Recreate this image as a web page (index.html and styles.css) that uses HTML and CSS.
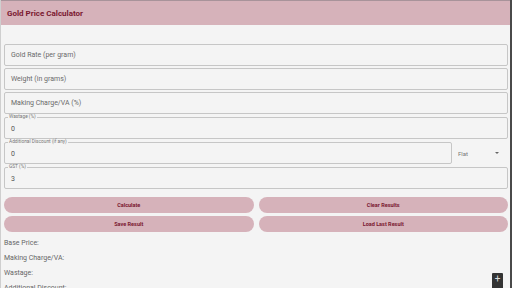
FILE: index.html
```html
<!DOCTYPE html>
<html>
<head>
<meta charset="utf-8">
<link rel="stylesheet" href="styles.css">
</head>
<body>
<div class="page">
  <header class="appbar"><span class="title">Gold Price Calculator</span></header>
  <main class="content">
    <div class="field"><span class="ph">Gold Rate (per gram)</span></div>
    <div class="field"><span class="ph">Weight (in grams)</span></div>
    <div class="field"><span class="ph">Making Charge/VA (%)</span></div>
    <div class="field notched"><span class="legend">Wastage (%)</span><span class="val">0</span></div>
    <div class="row">
      <div class="field notched grow"><span class="legend">Additional Discount (if any)</span><span class="val">0</span></div>
      <div class="select"><span>Flat</span><span class="caret"></span></div>
    </div>
    <div class="field notched"><span class="legend">GST (%)</span><span class="val">3</span></div>
    <div class="buttons">
      <button class="btn">Calculate</button>
      <button class="btn">Clear Results</button>
      <button class="btn">Save Result</button>
      <button class="btn">Load Last Result</button>
    </div>
    <div class="results">
      <p>Base Price:</p>
      <p>Making Charge/VA:</p>
      <p>Wastage:</p>
      <p>Additional Discount:</p>
    </div>
  </main>
  <div class="fab">+</div>
</div>
</body>
</html>
```
FILE: styles.css
```css
* { box-sizing: border-box; }
html, body { margin: 0; padding: 0; }
body {
  width: 512px;
  height: 288px;
  overflow: hidden;
  background: #f4f4f4;
  font-family: Roboto, "Liberation Sans", sans-serif;
}
.page {
  position: relative;
  height: 288px;
  border-left: 1px solid #cfcfcf;
  border-right: 2px solid #4a4a4a;
  overflow: hidden;
}
.appbar {
  height: 25px;
  background: #d6b2ba;
  border-top: 1px solid #a8939a;
  display: flex;
  align-items: center;
  padding-left: 6px;
}
.title {
  font-size: 8px;
  font-weight: 700;
  color: #7a1830;
}
.content {
  padding: 19px 2px 0 3px;
  display: flex;
  flex-direction: column;
}
.field {
  position: relative;
  height: 22px;
  border: 1px solid #c6c6c6;
  border-radius: 2px;
  margin-bottom: 2px;
  display: flex;
  align-items: center;
  padding-left: 6px;
  font-size: 7px;
}
.ph { color: #6a6a6a; }
.notched { margin-top: 1px; }
.legend {
  position: absolute;
  top: -4px;
  left: 3px;
  font-size: 4.8px;
  line-height: 6px;
  color: #777;
  background: #f4f4f4;
  padding: 0 1px;
}
.val { color: #555; font-size: 7px; padding-top: 2px; }
.row { display: flex; margin-top: 1px; }
.row .field { margin-top: 0; }
.grow { flex: 1; }
.select {
  width: 56px;
  height: 22px;
  display: flex;
  align-items: center;
  justify-content: space-between;
  padding: 0 9px 0 6px;
  font-size: 6px;
  color: #777;
}
.caret {
  width: 0; height: 0;
  border-left: 2px solid transparent;
  border-right: 2px solid transparent;
  border-top: 2px solid #666;
}
.buttons {
  margin-top: 6px;
  display: grid;
  grid-template-columns: 1fr 1fr;
  column-gap: 5px;
  row-gap: 3px;
  padding-right: 0;
}
.btn {
  height: 16px;
  border: none;
  border-radius: 8px;
  background: #d6b2ba;
  color: #7a1830;
  font-family: Roboto, "Liberation Sans", sans-serif;
  font-weight: 700;
  font-size: 5.5px;
  padding: 0;
}
.results { margin-top: 4px; }
.results p {
  margin: 0;
  font-size: 7px;
  line-height: 15px;
  color: #666;
}
.fab {
  position: absolute;
  right: 7px;
  bottom: 0;
  width: 11px;
  height: 15px;
  background: #333;
  color: #ddd;
  font-size: 10px;
  line-height: 12px;
  text-align: center;
  border-radius: 1px 1px 0 0;
}
```
